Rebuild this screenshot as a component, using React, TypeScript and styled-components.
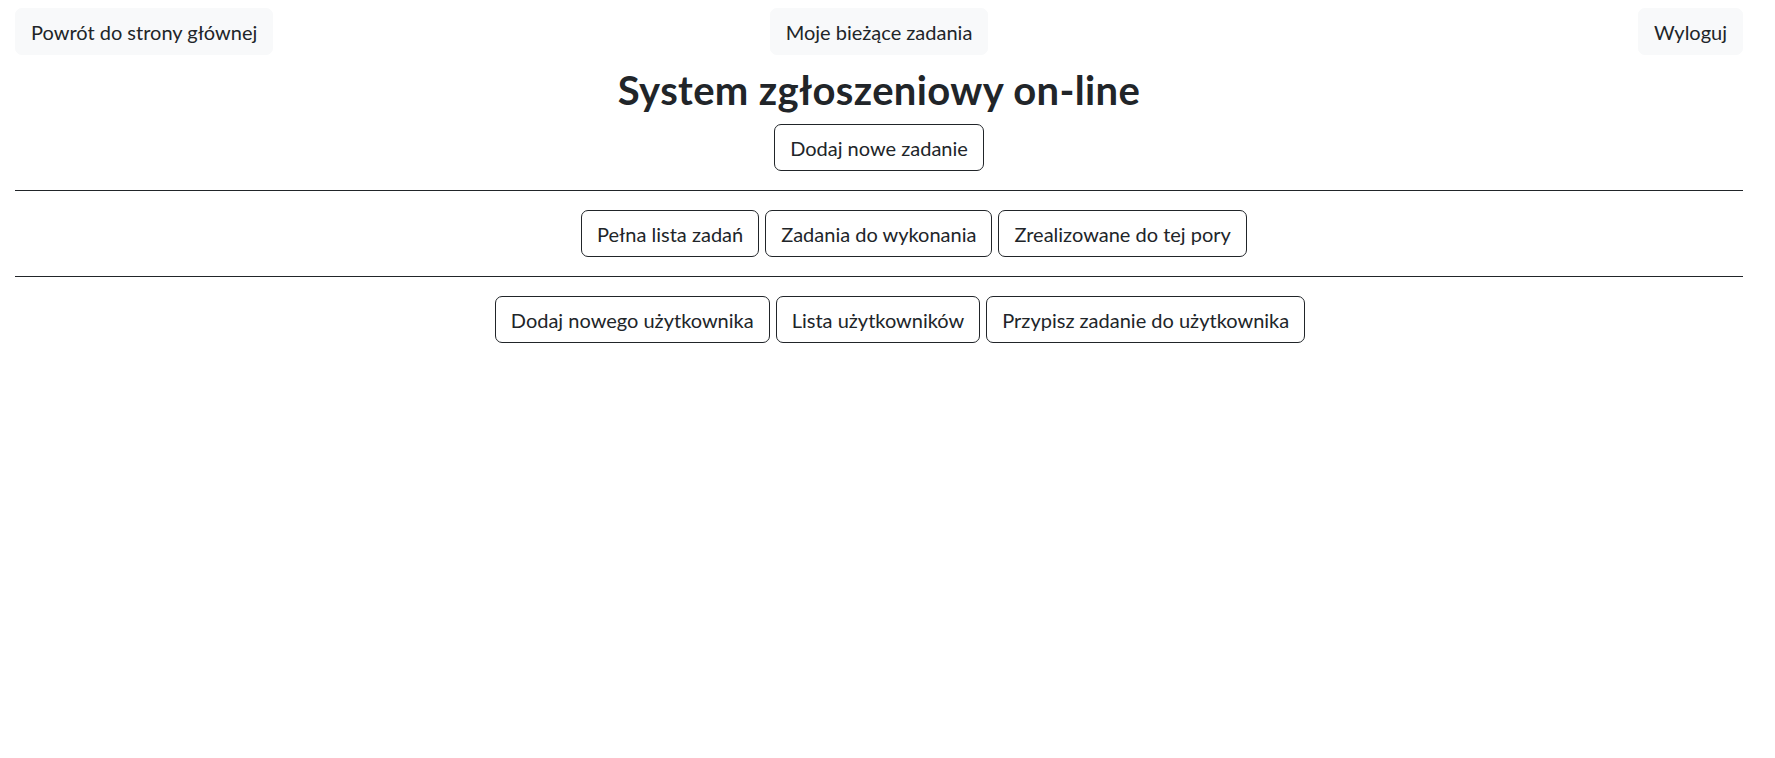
import React from "react";
import styled, { createGlobalStyle } from "styled-components";

const GlobalStyle = createGlobalStyle`
  html, body {
    margin: 0;
    padding: 0;
    background: #ffffff;
  }
  body {
    font-family: Lato, "Open Sans", "Noto Sans", sans-serif;
    color: #212529;
  }
`;

const Page = styled.div`
  box-sizing: border-box;
  width: 1775px;
  padding: 8px 32px 0 15px;
`;

const TopBar = styled.nav`
  display: grid;
  grid-template-columns: 1fr 1fr 1fr;
  align-items: center;
`;

const Slot = styled.div<{ $align: "start" | "center" | "end" }>`
  display: flex;
  justify-content: ${(p) => (p.$align === "start" ? "flex-start" : p.$align === "end" ? "flex-end" : "center")};
`;

const Button = styled.button<{ $variant: "light" | "outline" }>`
  box-sizing: border-box;
  height: 47px;
  padding: 0 15px;
  font-family: Lato, "Open Sans", "Noto Sans", sans-serif;
  font-size: 20px;
  line-height: 1;
  color: #212529;
  border-radius: 7px;
  cursor: pointer;
  white-space: nowrap;
  background: ${(p) => (p.$variant === "light" ? "#f8f9fa" : "#ffffff")};
  border: 1.25px solid ${(p) => (p.$variant === "light" ? "#f8f9fa" : "#212529")};
`;

const Header = styled.header`
  display: flex;
  flex-direction: column;
  align-items: center;
  margin-top: 11px;
`;

const Title = styled.h2`
  margin: 0 0 10px;
  font-size: 40px;
  line-height: 48px;
  font-weight: 700;
  letter-spacing: 0.35px;
  color: #212529;
`;

const Divider = styled.hr`
  margin: 19px 0 0;
  border: 0;
  border-top: 1px solid #212529;
`;

const ButtonRow = styled.div<{ $shift: number }>`
  display: flex;
  justify-content: center;
  gap: 6px;
  margin-top: 19px;
  padding-left: ${(p) => p.$shift}px;
`;

export default function App() {
  return (
    <>
      <GlobalStyle />
      <Page>
        <TopBar>
          <Slot $align="start">
            <Button $variant="light">Powrót do strony głównej</Button>
          </Slot>
          <Slot $align="center">
            <Button $variant="light">Moje bieżące zadania</Button>
          </Slot>
          <Slot $align="end">
            <Button $variant="light">Wyloguj</Button>
          </Slot>
        </TopBar>
        <Header>
          <Title>System zgłoszeniowy on-line</Title>
          <Button $variant="outline">Dodaj nowe zadanie</Button>
        </Header>
        <Divider />
        <ButtonRow $shift={70}>
          <Button $variant="outline">Pełna lista zadań</Button>
          <Button $variant="outline">Zadania do wykonania</Button>
          <Button $variant="outline">Zrealizowane do tej pory</Button>
        </ButtonRow>
        <Divider />
        <ButtonRow $shift={42}>
          <Button $variant="outline">Dodaj nowego użytkownika</Button>
          <Button $variant="outline">Lista użytkowników</Button>
          <Button $variant="outline">Przypisz zadanie do użytkownika</Button>
        </ButtonRow>
      </Page>
    </>
  );
}
